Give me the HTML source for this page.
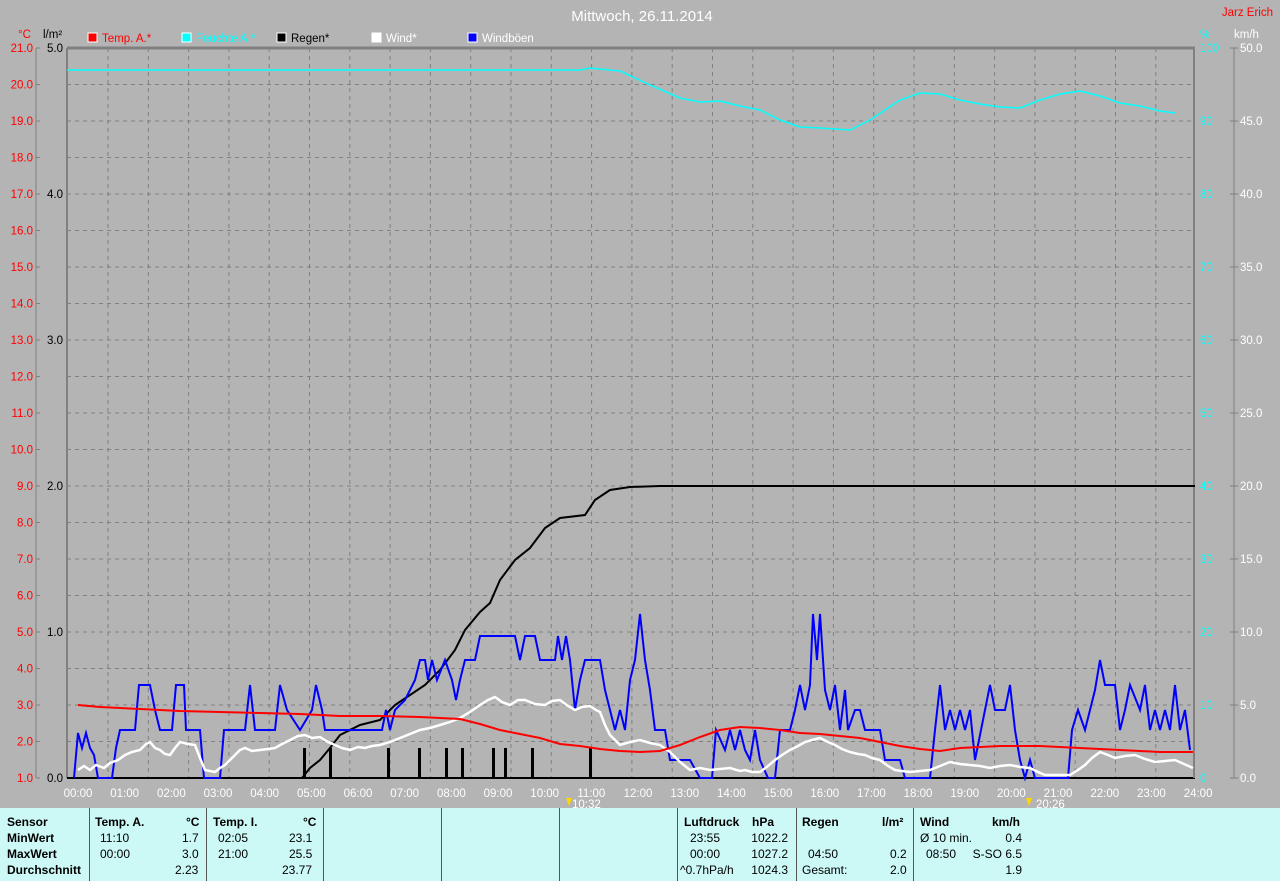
<!DOCTYPE html><html><head><meta charset="utf-8"><style>
body{margin:0;width:1280px;height:881px;background:#b4b4b4;font-family:"Liberation Sans",sans-serif;overflow:hidden;position:relative}
svg{position:absolute;left:0;top:0}
.p{position:absolute;top:808px;left:0;width:1280px;height:73px;background:#ccf8f6}
.t{position:absolute;font-size:12px;color:#000;white-space:nowrap}
.b{font-weight:bold}
.v{position:absolute;top:808px;height:73px;width:1px;background:#555}
</style></head><body>
<svg width="1280" height="808" font-family="Liberation Sans" font-size="11.5">
<text x="642" y="21" fill="#fff" font-size="15" text-anchor="middle">Mittwoch, 26.11.2014</text>
<text x="1273" y="16" fill="#f00" text-anchor="end">Jarz Erich</text>
<text x="18" y="38" fill="#f00">°C</text><text x="43" y="38" fill="#000">l/m²</text>
<text x="1200" y="38" fill="#0ff">%</text><text x="1234" y="38" fill="#fff">km/h</text>
<rect x="88" y="33" width="9" height="9" fill="#f00" stroke="#fff"/><text x="102" y="42" fill="#f00">Temp. A.*</text>
<rect x="182" y="33" width="9" height="9" fill="#0ff" stroke="#fff"/><text x="196" y="42" fill="#0ff">Feuchte A.*</text>
<rect x="277" y="33" width="9" height="9" fill="#000" stroke="#fff"/><text x="291" y="42" fill="#000">Regen*</text>
<rect x="372" y="33" width="9" height="9" fill="#fff" stroke="#fff"/><text x="386" y="42" fill="#fff">Wind*</text>
<rect x="468" y="33" width="9" height="9" fill="#00f" stroke="#fff"/><text x="482" y="42" fill="#fff">Windböen</text>
<g stroke="#808080" stroke-dasharray="4,4" stroke-width="1" id="g"></g>
<line x1="67" y1="48" x2="1195" y2="48" stroke="#808080" stroke-width="3"/>
<line x1="67" y1="778" x2="1195" y2="778" stroke="#000" stroke-width="2"/>
<line x1="67" y1="48" x2="67" y2="778" stroke="#808080" stroke-width="2"/>
<line x1="1194" y1="48" x2="1194" y2="778" stroke="#808080" stroke-width="2"/>
<line x1="36" y1="48" x2="36" y2="778" stroke="#808080"/>
<line x1="1234" y1="48" x2="1234" y2="778" stroke="#808080"/>
<g id="lab"></g>
<polyline fill="none" stroke="#0ff" stroke-width="1.5" points="67,70 580,70 590,68 620,71 650,85 680,98 700,102 720,101 740,106 760,110 780,120 800,127 820,128 850,130 870,120 900,100 920,93 940,94 960,100 980,104 1000,107 1020,108 1040,100 1060,94 1080,91 1100,96 1120,103 1140,106 1160,111 1175,113"/>
<g fill="#000"><rect x="303" y="748" width="3" height="30"/><rect x="329" y="748" width="3" height="30"/><rect x="387" y="748" width="3" height="30"/><rect x="418" y="748" width="3" height="30"/><rect x="445" y="748" width="3" height="30"/><rect x="461" y="748" width="3" height="30"/><rect x="492" y="748" width="3" height="30"/><rect x="504" y="748" width="3" height="30"/><rect x="531" y="748" width="3" height="30"/><rect x="589" y="748" width="3" height="30"/></g>
<polyline fill="none" stroke="#000" stroke-width="2" points="67,778 302,778 310,768 320,760 330,748 340,735 360,725 380,720 395,705 410,695 425,685 440,670 455,650 465,630 480,612 490,603 500,580 515,560 530,548 545,528 560,518 585,515 595,500 610,490 630,487 660,486 1195,486"/>
<polyline fill="none" stroke="#00f" stroke-width="2" points="74,778 78,733 82,748 86,733 90,748 94,755 98,778 112,778 116,748 120,730 135,730 139,685 150,685 155,710 160,730 172,730 176,685 184,685 186,730 200,730 204,778 220,778 224,730 245,730 250,685 255,730 275,730 280,685 287,710 300,730 312,710 316,685 322,710 325,730 382,730 386,710 390,730 395,710 405,700 415,680 420,660 425,660 428,680 432,660 437,680 445,660 452,680 456,700 460,680 465,660 475,660 480,636 515,636 520,660 525,636 535,636 540,660 555,660 558,636 562,660 566,636 570,660 575,710 580,680 585,660 600,660 605,690 610,710 615,730 620,710 625,730 630,680 635,660 640,614 645,660 650,690 655,730 665,730 670,760 680,760 690,760 700,778 712,778 716,730 725,750 730,730 735,750 740,730 745,750 750,760 755,730 760,760 768,778 775,778 780,730 790,730 795,710 800,685 805,710 810,685 813,614 817,660 820,614 825,690 830,710 835,685 840,730 845,690 848,730 855,710 860,710 865,730 880,730 885,760 900,760 905,778 930,778 935,730 940,685 945,730 950,710 955,730 960,710 965,730 970,710 975,760 985,710 990,685 995,710 1005,710 1010,685 1015,730 1020,760 1025,778 1030,760 1035,778 1068,778 1072,730 1078,710 1085,730 1090,710 1095,690 1100,660 1105,685 1115,685 1120,730 1125,710 1130,685 1140,710 1145,685 1150,730 1155,710 1160,730 1165,710 1170,730 1175,685 1180,730 1185,710 1190,750"/>
<polyline fill="none" stroke="#fff" stroke-width="2.5" points="78,770 84,766 90,770 96,765 104,768 110,763 118,760 125,755 132,752 140,750 146,744 150,742 155,748 160,750 165,754 170,755 175,748 180,742 188,744 195,745 200,758 205,770 210,771 215,772 220,768 225,765 230,760 235,755 240,750 245,748 252,751 260,750 268,749 275,748 282,744 290,740 298,736 305,735 312,738 320,737 328,742 335,745 342,748 350,750 358,747 365,748 372,746 380,745 390,742 400,738 410,734 420,730 430,728 440,725 450,722 460,718 470,712 480,705 488,700 495,697 502,702 510,705 518,700 525,700 535,704 545,705 552,701 560,700 568,706 575,710 582,707 590,706 596,710 600,712 605,725 610,735 615,740 620,745 630,742 640,740 650,743 660,745 670,752 680,762 690,770 700,768 710,770 720,769 730,768 740,771 745,770 752,772 760,772 768,766 775,760 782,755 790,750 798,746 805,742 812,740 820,738 828,742 835,745 842,749 850,752 858,754 865,755 872,758 880,760 888,766 895,770 902,771 910,772 920,771 930,770 940,766 950,762 960,764 970,765 980,766 990,768 1000,766 1010,765 1020,767 1030,768 1038,772 1045,775 1058,775 1070,775 1078,770 1085,765 1092,758 1100,752 1108,755 1115,758 1125,756 1135,755 1145,759 1155,762 1165,761 1175,760 1184,764 1193,768"/>
<path fill="none" stroke="#f00" stroke-width="2" d="M78 705 L100 707 L140 709 L180 711 L220 712 L260 713 L300 714 L340 716 L380 716 L420 717 L460 719 L480 724 L500 730 L520 734 L540 738 L560 744 L580 746 L600 749 L620 751 L640 752 L660 751 L680 745 L700 737 L720 730 L740 727 L760 728 L780 730 L800 733 L820 734 L840 736 L860 738 L880 742 L900 746 L920 749 L940 751 L960 748 L980 747 L1000 746 L1020 746 L1040 746 L1060 747 L1080 748 L1100 749 L1120 750 L1140 751 L1160 752 L1193 752"/>
<g fill="#ffd700"><polygon points="566,798 572,798 569,806"/><polygon points="1026,798 1032,798 1029,806"/></g>
<text x="572" y="808" fill="#fff">10:32</text><text x="1036" y="808" fill="#fff">20:26</text>
</svg>
<script>
var s="http://www.w3.org/2000/svg",g=document.getElementById('g'),L=document.getElementById('lab');
function el(t,a,p,txt){var e=document.createElementNS(s,t);for(var k in a)e.setAttribute(k,a[k]);if(txt)e.textContent=txt;p.appendChild(e);}
for(var x=108;x<1193;x+=40.3)el('line',{x1:x,y1:48,x2:x,y2:778},g);
for(var i=1;i<20;i++){var y=48+i*36.5;el('line',{x1:67,y1:y,x2:1194,y2:y},g);}
for(var i=0;i<=20;i++){var y=48+i*36.5;el('text',{x:33,y:y+4,fill:'#f00','text-anchor':'end'},L,(21-i).toFixed(1));el('line',{x1:36,y1:y,x2:40,y2:y,stroke:'#808080'},L);}
for(var i=0;i<=5;i++){var y=778-i*146;el('text',{x:63,y:y+4,fill:'#000','text-anchor':'end'},L,i.toFixed(1));}
for(var i=0;i<=10;i++){var y=778-i*73;el('text',{x:1200,y:y+4,fill:'#0ff'},L,String(i*10));el('text',{x:1240,y:y+4,fill:'#fff'},L,(i*5).toFixed(1));el('line',{x1:1230,y1:y,x2:1238,y2:y,stroke:'#808080'},L);}
for(var h=0;h<=24;h++){var x=78+h*46.67;el('text',{x:x,y:797,fill:'#fff','text-anchor':'middle'},L,(h<10?'0':'')+h+':00');}
</script>
<div class="p"></div>
<div class="v" style="left:89px"></div><div class="v" style="left:206px"></div><div class="v" style="left:323px"></div><div class="v" style="left:441px"></div><div class="v" style="left:559px"></div><div class="v" style="left:677px"></div><div class="v" style="left:796px"></div><div class="v" style="left:913px"></div>
<div class="t b" style="left:7px;top:815px">Sensor</div><div class="t b" style="left:7px;top:831px">MinWert</div><div class="t b" style="left:7px;top:847px">MaxWert</div><div class="t b" style="left:7px;top:863px">Durchschnitt</div>
<div class="t b" style="left:95px;top:815px">Temp. A.</div><div class="t b" style="left:186px;top:815px">°C</div>
<div class="t" style="left:100px;top:831px">11:10</div><div class="t" style="left:182px;top:831px">1.7</div>
<div class="t" style="left:100px;top:847px">00:00</div><div class="t" style="left:182px;top:847px">3.0</div><div class="t" style="left:175px;top:863px">2.23</div>
<div class="t b" style="left:213px;top:815px">Temp. I.</div><div class="t b" style="left:303px;top:815px">°C</div>
<div class="t" style="left:218px;top:831px">02:05</div><div class="t" style="left:289px;top:831px">23.1</div>
<div class="t" style="left:218px;top:847px">21:00</div><div class="t" style="left:289px;top:847px">25.5</div><div class="t" style="left:282px;top:863px">23.77</div>
<div class="t b" style="left:684px;top:815px">Luftdruck</div><div class="t b" style="left:752px;top:815px">hPa</div>
<div class="t" style="left:690px;top:831px">23:55</div><div class="t" style="left:734px;top:831px;width:54px;text-align:right">1022.2</div>
<div class="t" style="left:690px;top:847px">00:00</div><div class="t" style="left:734px;top:847px;width:54px;text-align:right">1027.2</div>
<div class="t" style="left:680px;top:863px">^0.7hPa/h</div><div class="t" style="left:734px;top:863px;width:54px;text-align:right">1024.3</div>
<div class="t b" style="left:802px;top:815px">Regen</div><div class="t b" style="left:882px;top:815px">l/m²</div>
<div class="t" style="left:808px;top:847px">04:50</div><div class="t" style="left:890px;top:847px">0.2</div>
<div class="t" style="left:802px;top:863px">Gesamt:</div><div class="t" style="left:890px;top:863px">2.0</div>
<div class="t b" style="left:920px;top:815px">Wind</div><div class="t b" style="left:992px;top:815px">km/h</div>
<div class="t" style="left:920px;top:831px">Ø 10 min.</div><div class="t" style="left:1000px;top:831px;width:22px;text-align:right">0.4</div>
<div class="t" style="left:926px;top:847px">08:50</div><div class="t" style="left:970px;top:847px;width:52px;text-align:right">S-SO 6.5</div>
<div class="t" style="left:1000px;top:863px;width:22px;text-align:right">1.9</div>
</body></html>
